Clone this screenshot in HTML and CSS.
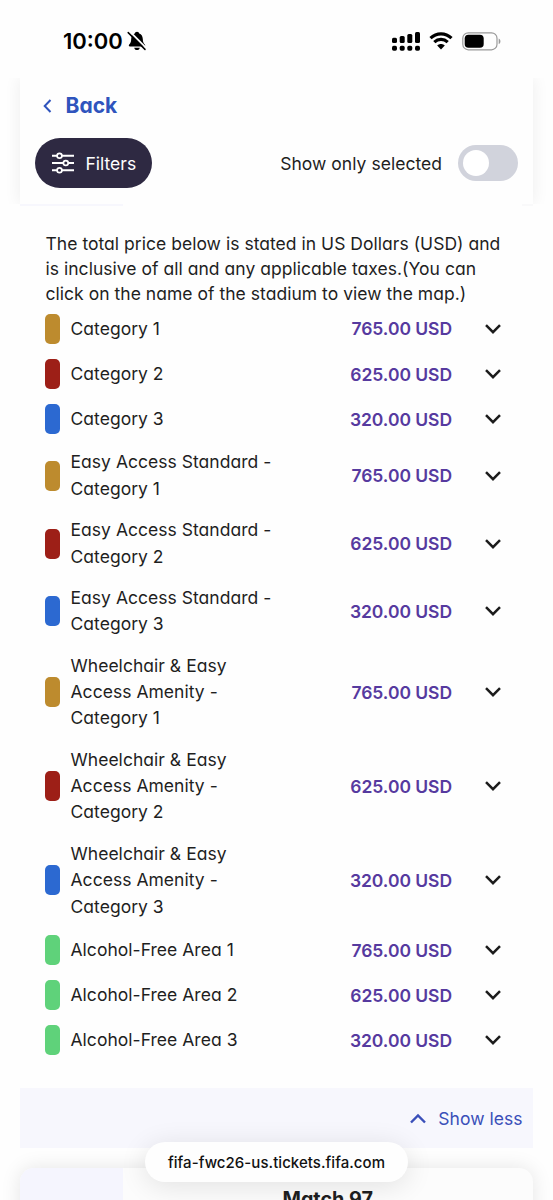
FILE: index.html
```html
<!DOCTYPE html>
<html lang="en">
<head>
<meta charset="utf-8">
<title>Ticket prices</title>
<link rel="stylesheet" href="styles.css">
</head>
<body>
<svg class="defs" width="0" height="0"><symbol id="down" viewBox="0 0 18 12"><path d="M2 2.200 9 9.200 16 2.200" fill="none" stroke="currentColor" stroke-width="2.500"/></symbol></svg>
<div class="statusbar">
  <div class="clock"><span class="time">10:00</span>
    <svg class="bell" width="20" height="20" viewBox="0 0 20 20"><path d="M10 .8c-1.200 0-2 .7-2.200 1.700C5.400 3.400 4.300 5.300 4.200 8c-.1 3-.6 4-2 5.500-.8.900-.4 1.900.7 1.900h14.200c1.100 0 1.500-1 .7-1.900-1.400-1.500-1.900-2.500-2-5.500-.1-2.700-1.200-4.600-3.600-5.500C12 1.500 11.200.8 10 .8Z"/><path d="M7.200 16.700h5.600c-.3 1.500-1.300 2.300-2.800 2.300s-2.500-.8-2.800-2.300Z"/><path d="m2.600.4 17 17" stroke="#fff" stroke-width="2"/><path d="m1.200 1.600 16.800 16.800" stroke="#000" stroke-width="1.500" stroke-linecap="round"/></svg>
  </div>
  <div class="signals">
    <svg width="28" height="20" viewBox="0 0 28 20"><rect x="0" y="6.700" width="5" height="5.400" rx="1.500"/><rect x="7.700" y="5" width="5" height="7.100" rx="1.500"/><rect x="15.300" y="3" width="5" height="9.100" rx="1.500"/><rect x="23" y="1" width="5" height="11.100" rx="1.500"/><rect x="0" y="14.700" width="5" height="5" rx="1.700"/><rect x="7.700" y="14.700" width="5" height="5" rx="1.700"/><rect x="15.300" y="14.700" width="5" height="5" rx="1.700"/><rect x="23" y="14.700" width="5" height="5" rx="1.700"/></svg>
    <svg class="wifi" width="24" height="18" viewBox="0 0 24 18"><path d="M1.500 6.200C7.500.5 16.500.5 22.500 6.200M5.300 10.200c3.900-3.700 9.500-3.700 13.400 0" fill="none" stroke="#000" stroke-width="3.200"/><path d="M8.200 13.500c2.200-2 5.400-2 7.600 0L12 17.500Z"/></svg>
    <svg width="40" height="19" viewBox="0 0 40 19"><rect x=".8" y=".8" width="34.200" height="17" rx="5.500" fill="none" stroke="#999" stroke-width="1.200"/><rect x="2.700" y="2.800" width="19" height="13" rx="3.800"/><path d="M36.700 6.500c2.300.9 2.300 4.700 0 5.600Z" fill="#999"/></svg>
  </div>
</div>
<div class="viewport">
<header class="panel">
  <a class="back"><svg width="9" height="14" viewBox="0 0 9 14"><path d="M7.500 1 1.700 7l5.800 6" fill="none" stroke="currentColor" stroke-width="2"/></svg><span>Back</span></a>
  <div class="controls">
    <div class="filters"><svg width="22" height="22" viewBox="0 0 22 22" fill="none" stroke="#fff" stroke-width="2"><path d="M0 3.700h5m5 0h12M0 11h11m5.500 0H22M0 18.300h5m5 0h12"/><circle cx="7.500" cy="3.700" r="2.400" stroke-width="1.700"/><circle cx="13.800" cy="11" r="2.400" stroke-width="1.700"/><circle cx="7.500" cy="18.300" r="2.400" stroke-width="1.700"/></svg><span>Filters</span></div>
    <span class="only">Show only selected</span>
    <span class="toggle"><i></i></span>
  </div>
</header>
<div class="edges"><i class="edge-left"></i><i class="edge-right"></i></div>
<main>
  <p class="intro">The total price below is stated in US Dollars (USD) and<br>is inclusive of all and any applicable taxes.(You can<br>click on the name of the stadium to view the map.)</p>
  <div class="row"><i class="chip gold"></i><span class="name">Category 1</span><b class="price">765.00 USD</b><svg class="arrow"><use href="#down"/></svg></div>
  <div class="row"><i class="chip red"></i><span class="name">Category 2</span><b class="price">625.00 USD</b><svg class="arrow"><use href="#down"/></svg></div>
  <div class="row"><i class="chip blue"></i><span class="name">Category 3</span><b class="price">320.00 USD</b><svg class="arrow"><use href="#down"/></svg></div>
  <div class="row"><i class="chip gold"></i><span class="name">Easy Access Standard -<br>Category 1</span><b class="price">765.00 USD</b><svg class="arrow"><use href="#down"/></svg></div>
  <div class="row"><i class="chip red"></i><span class="name">Easy Access Standard -<br>Category 2</span><b class="price">625.00 USD</b><svg class="arrow"><use href="#down"/></svg></div>
  <div class="row"><i class="chip blue"></i><span class="name">Easy Access Standard -<br>Category 3</span><b class="price">320.00 USD</b><svg class="arrow"><use href="#down"/></svg></div>
  <div class="row"><i class="chip gold"></i><span class="name">Wheelchair &amp; Easy<br>Access Amenity -<br>Category 1</span><b class="price">765.00 USD</b><svg class="arrow"><use href="#down"/></svg></div>
  <div class="row"><i class="chip red"></i><span class="name">Wheelchair &amp; Easy<br>Access Amenity -<br>Category 2</span><b class="price">625.00 USD</b><svg class="arrow"><use href="#down"/></svg></div>
  <div class="row"><i class="chip blue"></i><span class="name">Wheelchair &amp; Easy<br>Access Amenity -<br>Category 3</span><b class="price">320.00 USD</b><svg class="arrow"><use href="#down"/></svg></div>
  <div class="row"><i class="chip green"></i><span class="name">Alcohol-Free Area 1</span><b class="price">765.00 USD</b><svg class="arrow"><use href="#down"/></svg></div>
  <div class="row"><i class="chip green"></i><span class="name">Alcohol-Free Area 2</span><b class="price">625.00 USD</b><svg class="arrow"><use href="#down"/></svg></div>
  <div class="row"><i class="chip green"></i><span class="name">Alcohol-Free Area 3</span><b class="price">320.00 USD</b><svg class="arrow"><use href="#down"/></svg></div>
</main>
<div class="less"><svg width="16" height="11" viewBox="0 0 16 11"><path d="m1 9.500 7-7 7 7" fill="none" stroke="currentColor" stroke-width="2.400"/></svg><span>Show less</span></div>
<section class="match"><div class="side"></div><h2>Match 97</h2></section>
</div>
<div class="address"><span>fifa-fwc26-us.tickets.fifa.com</span></div>
</body>
</html>
```
FILE: styles.css
```css
* { box-sizing: border-box; }
html, body { height: 1200px; overflow: hidden; }
body { margin: 0; position: relative; background: #fefefe; color: #1f1f1f; font: 400 17.5px Inter, "Liberation Sans", sans-serif; font-feature-settings: "cv11" 1; }
.defs { position: absolute; }
svg { display: block; flex: none; }
.statusbar { height: 78px; display: flex; justify-content: space-between; align-items: flex-start; padding: 27px 51px 0 63px; color: #000; }
.clock { display: flex; align-items: center; height: 28px; gap: 4px; }
.time { font-size: 22px; font-weight: 600; letter-spacing: 0; }
.bell { margin-top: -1px; }
.signals { display: flex; align-items: center; height: 28px; gap: 9px; }
.signals > :first-child { margin-top: -1px; }
.viewport { height: 1122px; padding: 0 20px; overflow: hidden; }
.panel { height: 126px; padding: 14px 15px 0; background: #fefefe; box-shadow: 0 0 16px rgba(0,0,0,.07); clip-path: inset(0 -20px 0 -20px); }
.edges { display: flex; justify-content: space-between; height: 2px; }
.edge-left { width: 103px; background: #f7f7fd; }
.edge-right { width: 11px; background: #f9f9fa; }
.back { display: flex; align-items: center; height: 27px; padding-left: 8px; gap: 13.500px; color: #2f54bd; font-size: 21px; font-weight: 700; }
.controls { display: flex; align-items: center; height: 50px; margin-top: 19px; }
.filters { width: 117px; height: 50px; border-radius: 25px; background: #2e2942; color: #fff; display: flex; align-items: center; padding-left: 17px; gap: 11.500px; letter-spacing: 0; }
.only { margin-left: auto; letter-spacing: .03px; }
.toggle { width: 60px; height: 36px; border-radius: 18px; background: #d1d3dc; margin-left: 16px; margin-right: 0; padding: 5px; }
.toggle i { display: block; width: 26px; height: 26px; border-radius: 50%; background: #fff; }
main { padding: 25px 25px 0; height: 882px; }
.intro { margin: 0; padding-left: .500px; line-height: 25.200px; letter-spacing: .03px; white-space: nowrap; }
.row { display: flex; align-items: center; padding: 7.300px 0 7.900px; min-height: 45.200px; }
.chip { width: 15px; height: 30px; border-radius: 5px; flex: none; margin-right: 10.500px; }
.gold { background: #bd8b2e; }
.red { background: #9d1f17; }
.blue { background: #2c69d1; }
.green { background: #5fd27a; }
.name { line-height: 26.300px; letter-spacing: .03px; white-space: nowrap; }
.price { margin-left: auto; color: #563a9f; font-weight: 600; letter-spacing: -.05px; }
.arrow { width: 18px; height: 12px; margin: 0 6.500px 0 31.500px; color: #1c1c1c; }
.less { height: 60px; background: #f7f7fd; display: flex; align-items: center; justify-content: flex-end; padding-right: 10.500px; gap: 12px; color: #3a4fb9; letter-spacing: .03px; }
.match { margin-top: 20px; height: 80px; border-radius: 14px; background: #fcfcfc; box-shadow: 0 0 20px rgba(0,0,0,.1); display: flex; overflow: hidden; }
.side { width: 102.500px; background: #f5f5fe; }
.match h2 { flex: 1; margin: 18px 0 0; text-align: center; font-size: 19.800px; line-height: 26px; font-weight: 700; }
.address { position: absolute; left: 145px; top: 1142px; width: 263px; height: 40px; border-radius: 20px; background: #fefefe; color: #111; box-shadow: 0 4px 28px rgba(0,0,0,.11); display: flex; align-items: center; justify-content: center; font-size: 15px; font-weight: 500; letter-spacing: .05px; font-feature-settings: normal; }
```
